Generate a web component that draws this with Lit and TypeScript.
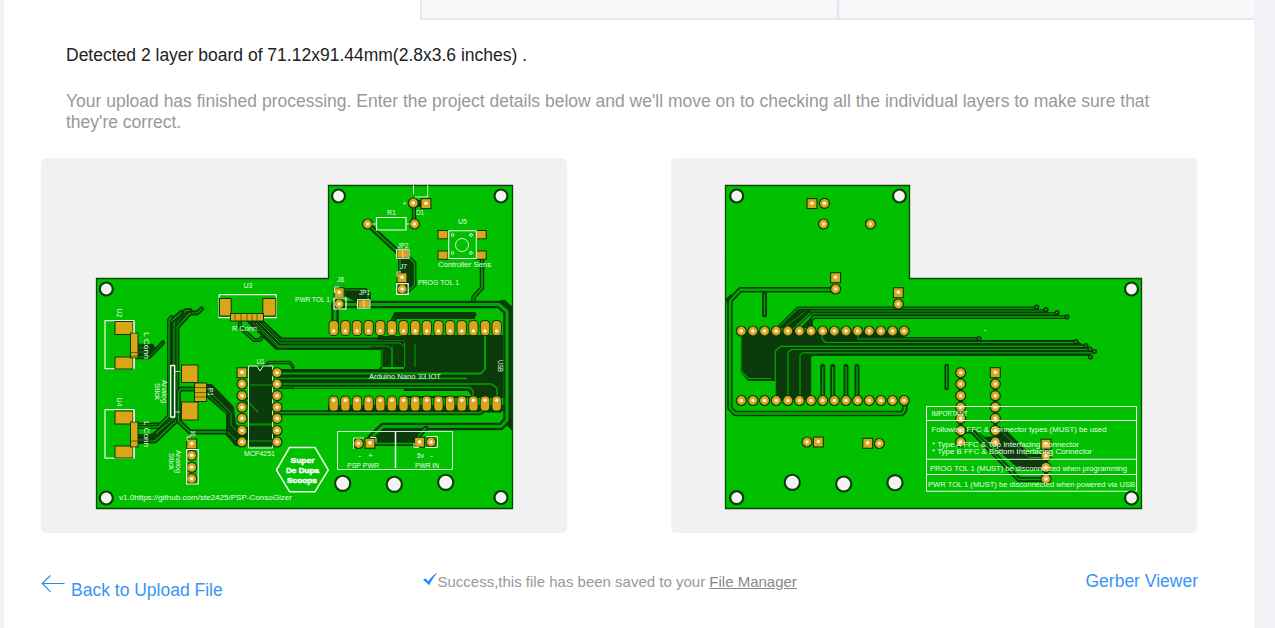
import { LitElement, html, svg, css } from "lit";
import { customElement } from "lit/decorators.js";

type Pt = [number, number];
const range = (n: number) => Array.from({ length: n }, (_, i) => i);

// A copper trace: dark clearance with a thin green core.
const trace = (d: string, w = 5, core = 1.6) => svg`
  <path class="clear" d=${d} stroke-width=${w}></path>
  <path class="core" d=${d} stroke-width=${core}></path>`;
const line = (d: string, w = 1) => svg`<path class="core" d=${d} stroke-width=${w}></path>`;
const dark = (d: string) => svg`<path class="dark" d=${d}></path>`;
const silk = (d: string, w = 1) => svg`<path class="silk" d=${d} stroke-width=${w}></path>`;
const box = (x: number, y: number, w: number, h: number, s = 1.2) => silk(`M${x} ${y}h${w}v${h}h${-w}z`, s);
const hole = ([x, y]: Pt, r = 7.6, i = 5.4) => svg`
  <circle class="dark" cx=${x} cy=${y} r=${r}></circle>
  <circle class="drill" cx=${x} cy=${y} r=${i}></circle>`;
const pad = ([x, y]: Pt) => svg`
  <circle class="dark" cx=${x} cy=${y} r="5.6"></circle>
  <circle class="gold" cx=${x} cy=${y} r="4.4"></circle>
  <circle class="drill" cx=${x} cy=${y} r="1.8"></circle>`;
const square = ([x, y]: Pt) => svg`
  <rect class="dark" x=${x - 5.5} y=${y - 5.5} width="11" height="11"></rect>
  <rect class="gold" x=${x - 4.4} y=${y - 4.4} width="8.8" height="8.8"></rect>
  <circle class="drill" cx=${x} cy=${y - 0.4} r="1.8"></circle>`;
const smd = (x: number, y: number, w: number, h: number) => svg`
  <rect class="dark" x=${x - 1} y=${y - 1} width=${w + 2} height=${h + 2}></rect>
  <rect class="gold" x=${x} y=${y} width=${w} height=${h}></rect>`;
const label = (t: string, x: number, y: number, len: number, size = 7) => svg`
  <text x=${x} y=${y} font-size=${size} textLength=${len} lengthAdjust="spacingAndGlyphs">${t}</text>`;
const turned = (t: string, x: number, y: number, len: number, a = 90) => svg`
  <text x="0" y="0" font-size="6.5" textLength=${len} lengthAdjust="spacingAndGlyphs" transform="translate(${x} ${y}) rotate(${a})">${t}</text>`;

const pinX = (i: number) => 333.7 + i * 11.64;
const rows = [372.7, 384, 395.7, 407.2, 418.4, 430.5, 442];

const front = svg`
  <path class="board" d="M328.5 185.5H512.5V508.5H96.5V278.5H328.5z"></path>
  ${trace("M201.5 309L197 313H190L177 327V420L155 441H138", 5, 1.2)}
  ${trace("M190 310.5H186L174 322V418L152 437H138", 5, 1.2)}
  ${trace("M181.5 312.5L170 322V418L161 425H138", 5, 1.4)}
  ${trace("M171.5 317L169 320V416L158 427H138", 4, 1.4)}
  ${trace("M137 346H152M137 350H149M137 357H149L163 342.5", 4.5, 1)}
  ${dark("M138 344h14l4 4-6 8h-12zM138 434h12l6-2 0 3-9 9h-9z")}
  ${line("M138 348h12M138 352h10M138 440h10", 0.8)}
  ${trace("M196 389H181L178.500 392V421L190 432H226L236 442H242", 5, 1.5)}
  ${dark("M206 384L212 384 234 407 236 424 242 428V446H235L226 434V414L205 396z")}
  ${line("M206 388L231 413V425L238 432M206 393L227 413M228 432L236 440", 1)}
  ${trace("M249 321L266 337M240 321V327L254 340H260L262 337", 4, 1.2)}
  ${dark("M250 321H264L282 337.500H404L416 342V367H378V350H276L248 323z")}
  ${line("M263 323L280 340H408L415.500 345V367M260 323L280 343H400L404.700 347V367M256 323L279 346H388L392 349V367M253 323L278 347H371", 1)}
  ${trace("M380.500 367V350.500H374", 4, 1)}
  ${dark("M378 336L404 336V340H378zM404 335H503V398H404zM277 369H503V389H277z")}
  ${dark("M415 336H503V398H478V372H415z")}
  <path class="green" d="M371 350h9v18h-9zM300 395v-2l4-2H468l3 4v1h-170z"></path>
  ${line("M277 373.500H481L485 369V335", 1.8)}
  ${line("M277 378.500H467M277 384H491.500L497 388V396M277 387.500H470L473 391V398", 1.3)}
  ${line("M404.700 342V367M392 346V367M382 349V367M415 344V367", 1)}
  ${trace("M292 387H277M265 366L269 362.500H290L293 367", 3.5, 0.9)}
  ${trace("M242 395.700L260 412.700H480L484 410H500", 5, 1.6)}
  ${dark("M328 405H503V411H328z")}
  ${trace("M392 323L396 314.500H474", 5, 1)}
  ${dark("M395 313.500H475V319H393z")}
  ${dark("M500 300H505L512.500 307V310L509 311V421L512.500 419V431L503 422 506 415V311z")}
  ${dark("M510.300 308H512.500V425H510.300z")}
  ${trace("M335 322V304.500H499L507 311.500V420L501 426.500H383L371 438", 7.5, 3)}
  ${dark("M372 441L385 430H427L420 438V443H372zM345 288H366L371 293V301H354L345 296z")}
  ${trace("M345 290H365L368 295V301", 3.5, 1)}
  ${trace("M372 443.500H419V435L426 428", 5, 1.6)}
  ${trace("M367.500 224L400 254", 5.4, 1.5)}
  ${trace("M414 222V204", 4.5, 1.5)}
  ${dark("M398 257L410 257 414 262V286L408 292H398zM413 200H426V207H413z")}
  ${trace("M400 257V275M408 257L414.500 263V285L408 291", 4, 1.3)}
  ${trace("M482 260V288L473.500 297V301", 4.5, 1.6)}

  <rect class="dark" x="248.500" y="366.500" width="24" height="80"></rect>
  ${line("M242 395.700L258 412M248 424H272M245 418V430", 1.1)}
  ${dark("M240 427H276V440H240z")}
  ${line("M246 425H275M246 441H275M250 385H275", 1)}
  ${silk("M248.500 448V366H257L260 371 263 366H272.500V448z", 0.9)}
  ${rows.map((y, i) => svg`${i ? pad([242, y]) : square([242, y])}${pad([277, y])}`)}

  ${box(105, 320.700, 29, 48)}
  ${smd(115.500, 322, 17, 12)}${smd(115.500, 357.500, 17, 11)}${smd(131, 333.500, 6.500, 24)}
  ${box(105, 409.700, 29, 48.500)}
  ${smd(115.500, 411.500, 17, 12)}${smd(115.500, 446.500, 17, 11)}${smd(131, 422.500, 6.500, 24)}
  ${silk("M134 321V333M134 358V368.500M134 410V422M134 447V458", 1.3)}
  <path class="clear" stroke-width=".6" d="M131 352.500h6M131 356h6M131 441h6"></path>
  ${smd(182, 365.500, 15.500, 16.500)}${smd(182, 402.500, 15.500, 17)}
  ${smd(195, 383.500, 11, 17.500)}
  <path class="clear" stroke-width=".6" d="M194 387.500h12M194 392.500h12M194 397h12"></path>
  ${box(170.700, 365.500, 4, 51.500, 1.4)}${silk("M175 371.500h5M175 412h5", 0.8)}
  ${box(219.200, 294.700, 57, 23)}
  ${smd(220, 299, 10.700, 16.500)}${smd(263.300, 299, 12, 16.500)}${smd(231, 314, 32, 6.500)}
  <path class="clear" stroke-width=".6" d="M235 314v7M241 314v7M247 314v7M252 314v7M257 314v7"></path>

  ${range(15).map((i) => svg`
    <rect class="dark" x=${pinX(i) - 5.2} y="320" width="10.400" height="16" rx="4.500"></rect>
    <rect class="gold" x=${pinX(i) - 4.2} y="321" width="8.400" height="14" rx="3.600"></rect>
    <circle class="drill" cx=${pinX(i)} cy="331" r="1.700"></circle>
    <rect class="dark" x=${pinX(i) - 5.2} y="395.500" width="10.400" height="16" rx="4.500"></rect>
    <rect class="gold" x=${pinX(i) - 4.2} y="396.500" width="8.400" height="14" rx="3.600"></rect>
    <circle class="drill" cx=${pinX(i)} cy="400.200" r="1.700"></circle>`)}

  ${square([191.700, 444])}${[455.3, 467.3, 478.7].map((y) => pad([191.7, y]))}
  ${box(186.700, 449.500, 11.600, 34.500)}${silk("M187 441v-4h4", 0.9)}
  ${pad([413.300, 203])}${square([426, 203.600])}
  ${silk("M413.500 185V194M427.700 185V197H415", 0.9)}
  ${pad([367.500, 224])}${pad([414.500, 224])}${box(376.500, 217.500, 29.500, 12.500)}${silk("M372 224h4M406 224h4", 0.8)}
  ${smd(397.500, 250, 11, 7.500)}${box(396.600, 249.300, 12.500, 9, 1)}${silk("M402.800 250v8", 0.7)}
  ${square([402, 277.700])}${pad([402.200, 289])}${box(396.700, 283.700, 11.500, 10.700)}${silk("M397 277v-5h4", 0.9)}
  ${square([339.200, 292.700])}${pad([339.200, 304])}${box(334, 298, 12, 11)}${silk("M334.500 293v-6h5", 0.9)}
  ${smd(358.500, 300.500, 11, 7)}${box(357.500, 299.700, 12.500, 8.500, 1)}${silk("M363.800 300v8", 0.7)}
  ${smd(438.500, 231, 9, 7.300)}${smd(476.700, 231, 9, 7.300)}${smd(438.500, 251.500, 9, 7.300)}${smd(476.700, 251.500, 9, 7.300)}
  ${box(448.700, 230.700, 27.600, 27.800, 1.1)}
  <g class="silk" stroke-width=".9"><circle cx="462" cy="245" r="6.500"></circle><circle cx="452.500" cy="235" r="1.400"></circle><circle cx="471" cy="235" r="1.400"></circle><circle cx="452.500" cy="253" r="1.400"></circle><circle cx="471" cy="253" r="1.400"></circle></g>
  ${pad([358.500, 443.500])}${square([370, 443.300])}${square([419.500, 442.300])}${pad([431, 442])}
  ${silk("M337.500 431.500H452.500V469.500H337.500zM364 438h-10.500v11M370 437.500h6v5M414 443v4.500h5M425.500 447.500h12v-11h-11", 0.9)}
  ${silk("M395.500 431.500V468", 1.5)}
  ${silk("M276.500 470L289.500 447.500H315L328.300 470 315 491.700H289.500z", 1.5)}

  ${([[338.5, 196], [501, 196], [106.3, 289], [106.3, 498], [501, 497.5]] as Pt[]).map((p) => hole(p))}
  ${([[342.7, 483.3], [394.3, 484.3], [445.7, 482.3]] as Pt[]).map((p) => hole(p, 8.6, 6.5))}

  ${label("v1.0https://github.com/ste2425/PSP-ConsoGizer", 119, 500, 173)}
  ${label("MCP4251", 244, 455.500, 31)}${label("U1", 256.500, 363.500, 8)}
  ${label("Arduino Nano 33 IOT", 369, 379.300, 72, 6.500)}
  ${label("PWR TOL 1", 295, 301.500, 35)}${label("PROG TOL 1", 418, 285, 41)}
  ${label("Controller Sens", 438, 267.300, 53)}${label("U5", 458, 223.700, 9)}
  ${label("R1", 387, 215, 9)}${label("D1", 416, 214.500, 8)}${label("JP2", 397.500, 248, 11)}${label("J7", 400, 269, 7)}
  ${label("J8", 337, 282, 7)}${label("JP1", 359, 295, 11)}${label("U3", 243.500, 288, 9)}${label("R Conn.", 232, 331, 27)}
  ${label("J6", 189.500, 435.500, 6)}${label("+", 402.500, 205.500, 4)}
  ${label("PSP PWR", 347, 468, 32)}${label("PWR IN", 415, 468, 24)}${label("-", 358, 457.500, 3)}${label("+", 368, 457.500, 5)}${label("5v", 417, 458, 7)}${label("-", 430, 457.500, 3)}
  ${turned("U2", 117, 308.500, 9)}${turned("U4", 117, 397.500, 9)}
  ${turned("L Conn", 144, 332, 27)}${turned("L Conn", 144, 421, 26)}
  ${turned("Analog", 162, 380, 23)}${turned("Stick", 154.500, 383, 17)}
  ${turned("Analog", 176, 450, 23)}${turned("Stick", 169, 453, 17)}
  ${turned("P1", 207.500, 388, 8)}${turned("USB", 497.500, 360, 12)}
  <g class="badge">${label("Super", 290.500, 462.500, 24, 8)}${label("De Dupa", 286, 472.700, 33, 8)}${label("Scoops", 287, 483, 30, 8)}</g>`;

const backX = (i: number) => 741.3 + i * 11.63;
const back = svg`
  <path class="board" d="M725.500 185.500H909.500V278.500H1141.500V508.500H725.500z"></path>
  ${trace("M835 289.700H740.500L730 300.500V408L735 413.500H902L904.700 410V401", 5.500, 2.400)}
  ${dark("M725.500 299L731 294 733 296 727 303z")}
  ${trace("M764.500 294V315", 5, 1.200)}
  ${trace("M776 330L798 308.300H1036", 3.500, 1.100)}${trace("M788 330L807 311H1046", 3.500, 1.100)}
  ${trace("M792 330L809 313.800H1057", 3.500, 1.100)}${trace("M811 330V320L814 317H1067", 4, 1.400)}
  ${dark("M778 328L798 309.500H812L793 328zM800 328L812 316V328z")}
  ${line("M786 326L806 311M800 326L812 315", 0.8)}
  ${dark("M741 331H905V337H979V340H1076L1093 351 1090 356H812V400H775V381H748L740.500 372z")}
  ${line("M741 336V371L748.500 378.500H771M775.300 397V351L780.500 346.300H1086M788 397V352L792 349.500H1089M800 397V355L803 352.800H1095M811.500 397V357M822 335V339L825.500 342.500H1076M858 335V339H979", 1.200)}
  <path class="green" d="M812.500 357.800H1088V360H813V390h-1z"></path>
  ${[[1036.7, 307], [1046, 309.700], [1057, 312.500], [1067, 316.800], [979, 338.500], [1076, 341.700], [1086, 345.700], [1090, 349], [1094.500, 351.500], [1090.500, 357]].map(
    ([x, y]) => svg`<circle class="dark" cx=${x} cy=${y} r="2.600"></circle><circle class="core-dot" cx=${x} cy=${y} r=".9"></circle>`
  )}
  ${[822.7, 832.7, 846, 857].map((x) => trace(`M${x} 366.500V397`, 5, 1.400))}
  ${trace("M946.700 366V388", 4.500, 1.400)}
  ${range(15).map((i) => svg`${pad([backX(i), 331])}${pad([backX(i), 400.500])}`)}
  ${square([812, 203.600])}${pad([824.500, 203.300])}${pad([823.500, 224])}${pad([870.500, 224])}
  ${square([835.600, 277.700])}${pad([835.600, 289])}${square([898.300, 292.700])}${pad([898.300, 304])}
  ${pad([807, 442])}${square([818.400, 442])}${square([867.700, 443.300])}${pad([879.300, 443.500])}

  ${trace("M961 431H972L1019 479.500H1046", 5, 1.300)}
  ${dark("M994 436L1003 427 1030 454H1046V468H1022z")}
  ${dark("M975 430L985 437 997 436 1024 467H1046V470H1020z")}
  ${line("M1003 433L1029 457.500H1044M976 431L1020 476H1044", 1)}
  <path class="clear" stroke-width="4" d="M960.700 373V442M995.300 373V442M1046 444V479"></path>
  ${rows.map((y, i) => svg`${pad([960.7, y])}${i ? pad([995.3, y]) : square([995.3, y])}`)}
  ${square([1046, 444.200])}${[455.7, 467.4, 479].map((y) => pad([1046, y]))}

  ${silk("M926.500 406.500H1136.500V491.300H926.500zM926.500 420.500H1136.500M926.500 459.300H1136.500M926.500 474.500H1136.500", 1)}
  ${label("IMPORTANT", 931.500, 415.500, 36)}
  ${label("Following FFC & Connector types (MUST) be used", 931.500, 432, 175)}
  ${label("* Type A FFC & Top Interfacing Connector", 932, 446.800, 147)}
  ${label("* Type B FFC & Bottom Interfacing Connector", 932, 453.500, 160)}
  ${label("PROG TOL 1 (MUST) be disconnected when programming", 930, 470.500, 197)}
  ${label("PWR TOL 1 (MUST) be disconnected when powered via USB", 928, 486.500, 207)}
  ${silk("M984 330.500h2", 0.6)}

  ${([[736.7, 196], [899.5, 196], [1131.5, 289], [1131.5, 498], [736.7, 497.7]] as Pt[]).map((p) => hole(p))}
  ${([[792.3, 482.3], [843.7, 484], [895, 482.7]] as Pt[]).map((p) => hole(p, 8.6, 6.5))}`;

@customElement("app-root")
export class AppRoot extends LitElement {
  static styles = css`
    :host { display: block; font-family: "Liberation Sans", Arial, sans-serif; }
    .page { box-sizing: border-box; width: 1275px; height: 628px; padding: 0 21px 0 4px; background: #f0f2f6; overflow: hidden; }
    .sheet { height: 628px; background: #fff; display: flex; flex-direction: column; }
    .tabs { flex: none; height: 20px; display: grid; grid-template-columns: 416px 417px 417px; }
    .tab { box-sizing: border-box; background: #f8f9fb; border-left: 1px solid #e0e4e9; border-bottom: 1px solid #e0e4e9; box-shadow: inset 1px -1px 2px #e7eaee; }
    .intro { flex: none; height: 138px; box-sizing: border-box; padding: 25px 62px 0; font-size: 17.5px; line-height: 21px; }
    p { margin: 0; white-space: nowrap; }
    .detected { color: #222; }
    .note { margin-top: 25px; color: #999; }
    .previews { flex: none; display: flex; gap: 104px; padding-left: 37px; }
    .preview { width: 526px; height: 375px; border-radius: 5px; background: #f1f1f1; overflow: hidden; }
    .preview svg { display: block; width: 526px; height: 375px; }
    .board { fill: #00c000; stroke: #0a450a; stroke-width: 1.3; }
    .clear, .core, .silk { fill: none; stroke-linejoin: round; }
    .clear { stroke: #0b3b0b; stroke-linecap: round; }
    .core { stroke: #00a800; }
    .core-dot { fill: #3f9a3f; }
    .dark { fill: #0b3b0b; }
    .green { fill: #00c000; }
    .gold { fill: #daa516; }
    .drill { fill: #f3f3f1; }
    .silk { stroke: #eefbee; }
    text { fill: #e9fbe9; font-family: "Liberation Sans", Arial, sans-serif; }
    .badge text { font-weight: 700; fill: #fff; stroke: #fff; stroke-width: 0.5px; }
    .actions { display: grid; grid-template-columns: 381px 1fr auto; padding: 0 56px 0 37px; align-items: start; }
    .link { color: #3894f5; font-size: 17.5px; line-height: 21px; white-space: nowrap; text-decoration: none; }
    .back { display: flex; gap: 6px; padding-top: 41px; }
    .back .name { padding-top: 6px; }
    .back svg, .saved svg { display: block; flex: none; }
    .saved { display: flex; color: #999; font-size: 15px; line-height: 18px; padding-top: 40px; white-space: nowrap; }
    .saved svg { margin-right: -0.5px; }
    .saved a { color: #888; text-decoration: underline; }
    .viewer { padding-top: 38px; }
  `;

  render() {
    return html`<div class="page"><main class="sheet">
      <div class="tabs"><div></div><div class="tab"></div><div class="tab"></div></div>
      <section class="intro">
        <p class="detected">Detected 2 layer board of 71.12x91.44mm(2.8x3.6 inches) .</p>
        <p class="note">Your upload has finished processing. Enter the project details below and we'll move on to checking all the individual layers to make sure that<br />they're correct.</p>
      </section>
      <section class="previews">
        <div class="preview"><svg viewBox="41 158 526 375">${front}</svg></div>
        <div class="preview"><svg viewBox="671 158 526 375">${back}</svg></div>
      </section>
      <footer class="actions">
        <a class="link back"><svg width="24" height="20" viewBox="0 0 24 20" fill="none" stroke="#258bef" stroke-width="1.100"><path d="M9.500 1.500L1.200 9.500 9.500 17.800M1.200 9.500H23.500"></path></svg><span class="name">Back to Upload File</span></a>
        <div class="saved"><svg width="16" height="14" viewBox="0 0 16 14"><path fill="#258bef" d="M1 6.500L3.500 5.500 6.300 8.200C9 4.500 11.500 2 15.800 -.8 12 3.500 9.500 7.500 7.200 12.200z"></path></svg><span>Success,this file has been saved to your <a>File Manager</a></span></div>
        <a class="link viewer">Gerber Viewer</a>
      </footer>
    </main></div>`;
  }
}
